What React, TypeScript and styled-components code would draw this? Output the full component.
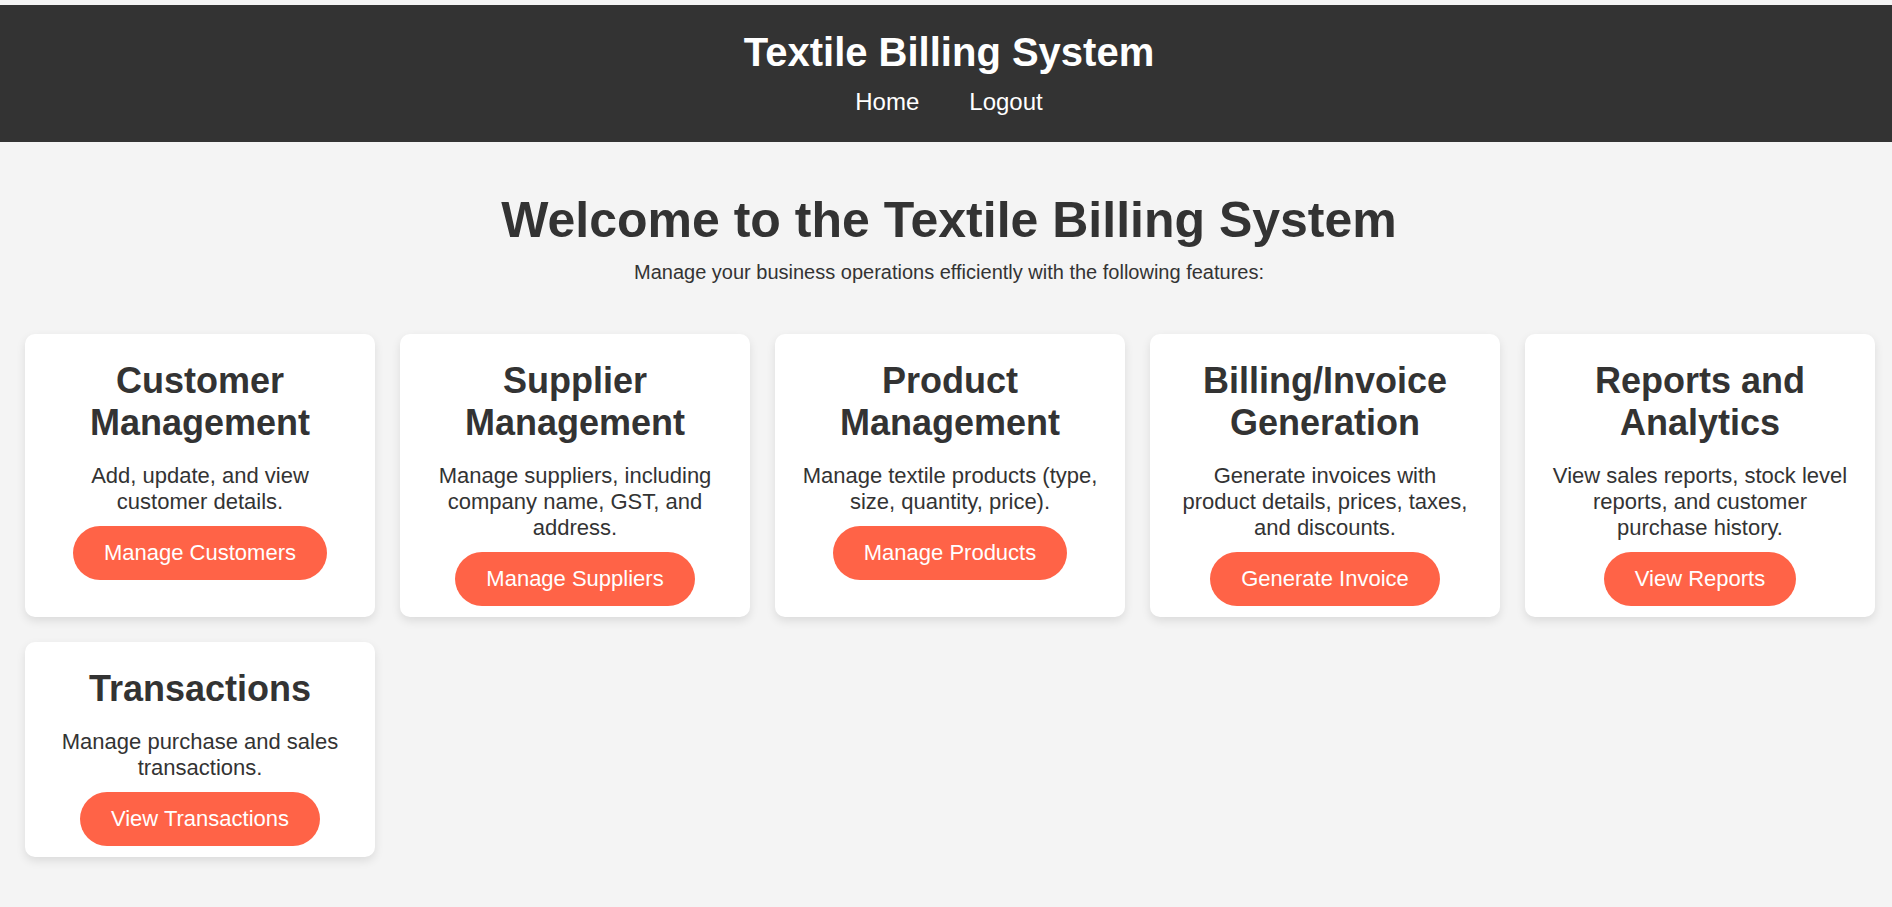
import React from "react";
import styled, { createGlobalStyle } from "styled-components";

const GlobalStyle = createGlobalStyle`
  html, body {
    margin: 0;
    padding: 0;
    background: #f4f4f4;
  }
  body {
    font-family: "Liberation Sans", Arial, sans-serif;
    color: #333;
  }
  * { box-sizing: border-box; }
`;

const Page = styled.div`
  padding-top: 5px;
  background: #f4f4f4;
`;

const Header = styled.header`
  background: #333;
  color: #fff;
  text-align: center;
  padding: 25px 0 26px 6px;
`;

const Title = styled.h1`
  margin: 0;
  font-size: 40px;
  font-weight: bold;
  line-height: normal;
`;

const Nav = styled.nav`
  display: flex;
  justify-content: center;
  gap: 50px;
  margin-top: 12.5px;
`;

const NavLink = styled.a`
  color: #fff;
  text-decoration: none;
  font-size: 24px;
  line-height: normal;
`;

const Intro = styled.section`
  text-align: center;
  padding: 49px 0 0 6px;
`;

const Welcome = styled.h1`
  margin: 0;
  font-size: 50px;
  font-weight: bold;
  line-height: normal;
  color: #333;
`;

const Subtitle = styled.p`
  margin: 12px 0 0;
  font-size: 20px;
  line-height: normal;
`;

const CardGrid = styled.div`
  display: flex;
  flex-wrap: wrap;
  gap: 25px;
  padding: 50px 0 25px 25px;
`;

const Card = styled.div`
  width: 350px;
  background: #fff;
  border-radius: 10px;
  box-shadow: 0 4px 10px rgba(0, 0, 0, 0.1);
  padding: 26px 25px 11px;
  text-align: center;
`;

const CardTitle = styled.h2`
  margin: 0 0 19px;
  font-size: 36px;
  font-weight: bold;
  line-height: normal;
  color: #333;
`;

const CardText = styled.p`
  margin: 0 0 11px;
  font-size: 22px;
  line-height: normal;
  color: #333;
`;

const ActionButton = styled.button`
  background: #ff6347;
  color: #fff;
  border: none;
  border-radius: 30px;
  padding: 14px 31.25px;
  font-family: "Liberation Sans", Arial, sans-serif;
  font-size: 22px;
  line-height: normal;
  cursor: pointer;
`;

const features = [
  {
    title: "Customer Management",
    text: "Add, update, and view customer details.",
    action: "Manage Customers",
  },
  {
    title: "Supplier Management",
    text: "Manage suppliers, including company name, GST, and address.",
    action: "Manage Suppliers",
  },
  {
    title: "Product Management",
    text: "Manage textile products (type, size, quantity, price).",
    action: "Manage Products",
  },
  {
    title: "Billing/Invoice Generation",
    text: "Generate invoices with product details, prices, taxes, and discounts.",
    action: "Generate Invoice",
  },
  {
    title: "Reports and Analytics",
    text: "View sales reports, stock level reports, and customer purchase history.",
    action: "View Reports",
  },
  {
    title: "Transactions",
    text: "Manage purchase and sales transactions.",
    action: "View Transactions",
  },
];

export default function App() {
  return (
    <Page>
      <GlobalStyle />
      <Header>
        <Title>Textile Billing System</Title>
        <Nav>
          <NavLink href="#">Home</NavLink>
          <NavLink href="#">Logout</NavLink>
        </Nav>
      </Header>
      <Intro>
        <Welcome>Welcome to the Textile Billing System</Welcome>
        <Subtitle>
          Manage your business operations efficiently with the following features:
        </Subtitle>
      </Intro>
      <CardGrid>
        {features.map((f) => (
          <Card key={f.title}>
            <CardTitle>{f.title}</CardTitle>
            <CardText>{f.text}</CardText>
            <ActionButton>{f.action}</ActionButton>
          </Card>
        ))}
      </CardGrid>
    </Page>
  );
}
